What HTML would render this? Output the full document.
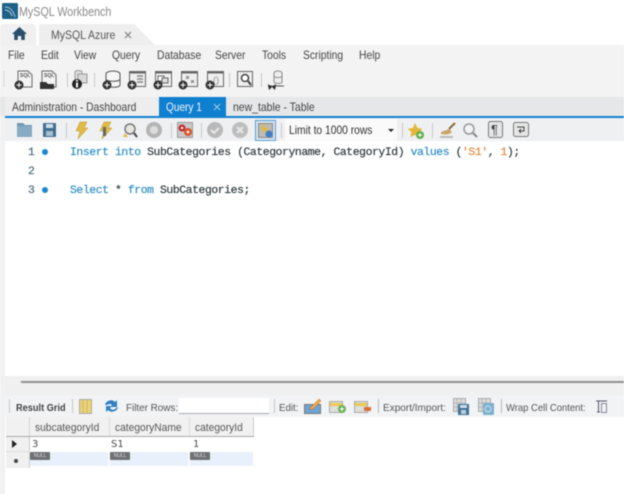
<!DOCTYPE html>
<html><head><meta charset="utf-8">
<style>
html,body{margin:0;padding:0;background:#fff;}
#p{position:relative;width:624px;height:494px;overflow:hidden;background:#fff;font-family:"Liberation Sans",sans-serif;filter:blur(0.5px);}
.a{position:absolute;}
.t{position:absolute;white-space:nowrap;font-size:12px;color:#333;line-height:14px;transform-origin:0 0;}
.mn{color:#444;top:48px;transform:scaleX(.86);}
.m{position:absolute;white-space:nowrap;font-family:"Liberation Mono","DejaVu Sans Mono",monospace;font-size:11.4px;letter-spacing:-.41px;line-height:14px;color:#2f3a3f;font-weight:500;-webkit-text-stroke:0.2px;}
.k{color:#2e8fc4}.o{color:#e08a3c}
.ln{position:absolute;font-family:"Liberation Mono",monospace;font-size:11.4px;line-height:14px;color:#4a6a80;-webkit-text-stroke:.2px;}
.n{position:absolute;width:20px;height:8px;background:#6d6f70;color:#ddd;font-size:5px;line-height:8px;text-align:center;border-radius:1px;}
svg{position:absolute;overflow:visible;}
.sep{position:absolute;width:1px;background:#c4c6c8;}
.gh{top:421px;font-size:11px;color:#555;transform:scaleX(.93);}
.gd{top:438px;font-family:"DejaVu Sans",sans-serif;font-size:10px;color:#4a4a4a;}
.rb{top:401px;font-size:10.5px;color:#555;}
</style></head><body><div id="p">

<!-- title bar -->
<svg style="left:2px;top:3px" width="16" height="16"><rect width="16" height="16" rx="1.5" fill="#1e6187"/><path d="M3 4c5 0 8 3 10 10M3 7c3 0 6 2 7 6" stroke="#a9cde0" stroke-width="1" fill="none"/></svg>
<div class="t" style="left:19px;top:5px;font-size:13px;color:#8a8a8a;transform:scaleX(.825)">MySQL Workbench</div>

<!-- connection tab strip -->
<div class="a" style="left:0;top:24px;width:36px;height:21px;background:#f0f0f0;border-radius:4px 4px 0 0"></div>
<svg style="left:0;top:24px" width="160" height="21"><path d="M39 21V3q0-3 3-3h92l21 21z" fill="#eeeeee"/></svg>
<svg style="left:11px;top:26px" width="17" height="15"><path d="M8.500 1L1 8h2.200v6h3.600v-4h3.400v4h3.600V8H16z" fill="#284e6c"/></svg>
<div class="t" style="left:51px;top:28px;color:#555;transform:scaleX(.875)">MySQL Azure</div>
<svg style="left:124px;top:31px" width="9" height="9"><path d="M1 1l6 6M7 1l-6 6" stroke="#777" stroke-width="1.100"/></svg>

<!-- menu + main toolbar -->
<div class="a" style="left:0;top:45px;width:624px;height:52px;background:#f3f3f3"></div>
<div class="t mn" style="left:8px">File</div>
<div class="t mn" style="left:41px">Edit</div>
<div class="t mn" style="left:74px">View</div>
<div class="t mn" style="left:112px">Query</div>
<div class="t mn" style="left:157px">Database</div>
<div class="t mn" style="left:215px">Server</div>
<div class="t mn" style="left:262px">Tools</div>
<div class="t mn" style="left:303px">Scripting</div>
<div class="t mn" style="left:359px">Help</div>

<svg style="left:0;top:66px" width="300" height="30">
 <path d="M4 5v16" stroke="#bbb" stroke-dasharray="1 1"/>
 <g stroke="#c4c6c8"><path d="M67.500 7v14M94.500 7v14M229.500 7v14M261.500 7v14"/></g>
 <!-- doc sql -->
 <g fill="#f4f4f4" stroke="#666"><path d="M18 5h10l4 4v12H18z"/><path d="M42 5h10l4 4v12H42z"/></g>
 <text x="20" y="11" font-size="5" font-weight="bold" fill="#555" font-family="Liberation Sans">SQL</text>
 <text x="44" y="11" font-size="5" font-weight="bold" fill="#555" font-family="Liberation Sans">SQL</text>
 <path d="M40 16h6l2 2h6v5H40z" fill="#333"/>
 <circle cx="19" cy="19" r="4.500" fill="#333"/><path d="M16.500 19h5M19 16.500v5" stroke="#fff"/>
 <!-- info -->
 <g fill="#ddd" stroke="#999"><path d="M75 6c0-2 7-2 7 0v9h-7z"/><rect x="78" y="8" width="9" height="9" fill="#d8d8d8"/></g>
 <circle cx="77" cy="18" r="5" fill="#222"/><rect x="76" y="16.500" width="2" height="5" fill="#fff"/><rect x="76" y="14" width="2" height="1.500" fill="#fff"/>
 <!-- db -->
 <g fill="#f6f6f6" stroke="#555"><ellipse cx="113" cy="8" rx="7" ry="3"/><path d="M106 8v11c0 3 14 3 14 0V8"/></g><path d="M106 13c0 3 14 3 14 0" fill="none" stroke="#555"/>
 <circle cx="107" cy="19" r="4.500" fill="#333"/><path d="M104.500 19h5M107 16.500v5" stroke="#fff"/>
 <!-- table boxes -->
 <g fill="#eee" stroke="#666"><rect x="129.500" y="5.500" width="16" height="15"/><rect x="155.500" y="5.500" width="16" height="15"/><rect x="181.500" y="5.500" width="16" height="15"/><rect x="207.500" y="5.500" width="16" height="15"/></g>
 <path d="M129 6.500h16M155 6.500h16M181 6.500h16M207 6.500h16" stroke="#666" stroke-width="2"/>
 <path d="M137 10h6M137 13h6M137 16h6" stroke="#888" stroke-width="1.500"/>
 <rect x="158" y="10" width="6" height="5" fill="#fff" stroke="#666"/><rect x="162" y="12" width="6" height="5" fill="#ddd" stroke="#666"/>
 <rect x="186" y="10" width="3" height="3" fill="#999"/><rect x="191" y="14" width="3" height="3" fill="#999"/>
 <text x="213" y="17" font-size="9" fill="#888" font-family="Liberation Sans">()</text>
 <g fill="#333"><circle cx="132" cy="19" r="4.500"/><circle cx="158" cy="19" r="4.500"/><circle cx="183" cy="19" r="4.500"/><circle cx="210" cy="19" r="4.500"/></g>
 <path d="M129.500 19h5M132 16.500v5M155.500 19h5M158 16.500v5M180.500 19h5M183 16.500v5M207.500 19h5M210 16.500v5" stroke="#fff"/>
 <!-- inspector -->
 <rect x="237.500" y="5.500" width="15" height="15" fill="#eee" stroke="#666"/><circle cx="245" cy="12" r="3.500" fill="#fff" stroke="#444" stroke-width="1.500"/><path d="M248 15l3 4" stroke="#444" stroke-width="2"/>
 <!-- reconnect -->
 <g fill="#eee" stroke="#888"><ellipse cx="278" cy="7" rx="4" ry="2"/><path d="M274 7v9c0 2 8 2 8 0V7"/><path d="M274 10c0 2 8 2 8 0" fill="none"/></g>
 <path d="M268 20h16" stroke="#555"/><path d="M268 18l4 3-3 3zM276 18l-4 3 3 3z" fill="#222"/>
</svg>

<!-- editor tab strip -->
<div class="a" style="left:0;top:97px;width:624px;height:19px;background:#e6e7e8"></div>
<div class="a" style="left:5px;top:97px;width:154px;height:19px;background:#ededee"></div>
<div class="t" style="left:12px;top:100px;color:#444;transform:scaleX(.855)">Administration - Dashboard</div>
<div class="a" style="left:159px;top:97px;width:67px;height:21px;background:#0f7fcf"></div>
<div class="t" style="left:166px;top:100px;color:#eef6fc;transform:scaleX(.84)">Query 1</div>
<svg style="left:213px;top:103px" width="9" height="9"><path d="M1 1l6 6M7 1l-6 6" stroke="#9cc9ea" stroke-width="1.100"/></svg>
<div class="t" style="left:233px;top:100px;color:#444;transform:scaleX(.87)">new_table - Table</div>
<div class="a" style="left:5px;top:116px;width:619px;height:2px;background:#1180d0"></div>

<!-- left gutter -->
<div class="a" style="left:0;top:116px;width:5px;height:378px;background:#f1f1f1"></div>

<!-- query toolbar -->
<div class="a" style="left:5px;top:118px;width:619px;height:23px;background:#eff0f1"></div>
<svg style="left:0;top:118px" width="624" height="23">
 <path d="M17 5h6l2 2h7v12H17z" fill="#6f98b3"/><rect x="17" y="8" width="15" height="11" fill="#86abc3"/>
 <rect x="43" y="5" width="13" height="14" rx="1" fill="#3f6f92"/><rect x="46" y="6" width="7" height="4" fill="#cfdde6"/><rect x="46" y="13" width="7" height="5" fill="#a9bfce"/>
 <g stroke="#c6c8ca"><path d="M66.500 5v15M171.500 5v15M201.500 5v15M281.500 5v15M402.500 5v15M432.500 5v15"/></g>
 <path d="M80 4l7 0-3 6h4l-10 11 2-8h-4z" fill="#e0bb45" stroke="#b99532" stroke-width=".5"/>
 <path d="M104 4l7 0-3 6h4l-10 11 2-8h-4z" fill="#e0bb45" stroke="#b99532" stroke-width=".5"/><rect x="103" y="9" width="3" height="9" fill="#666"/>
 <circle cx="130" cy="11" r="5" fill="#e6e6e0" stroke="#777" stroke-width="1.500"/><path d="M134 15l3 4" stroke="#444" stroke-width="2"/><path d="M125 15l-2 4h5z" fill="#e0bb45"/>
 <circle cx="154" cy="12" r="8" fill="#b4b4b4"/><circle cx="154" cy="12" r="4" fill="#dcdcdc"/>
 <rect x="177.500" y="4.500" width="15" height="15" fill="#c9c9c9" stroke="#999"/><circle cx="182" cy="10" r="3.500" fill="#c6262e"/><circle cx="188" cy="14" r="4" fill="#d9552b"/><circle cx="182" cy="10" r="1.200" fill="#fff"/><circle cx="188" cy="14" r="1.300" fill="#fff"/>
 <circle cx="215" cy="12" r="8" fill="#b9b9b9"/><path d="M211 12l3 3 5-5" stroke="#e8e8e8" stroke-width="2" fill="none"/>
 <circle cx="240" cy="12" r="8" fill="#bdbdbd"/><path d="M237 9l6 6M243 9l-6 6" stroke="#e8e8e8" stroke-width="2"/>
 <rect x="255.500" y="2.500" width="20" height="20" fill="#d8e6f2" stroke="#5c9bd0"/><rect x="258.500" y="5.500" width="14" height="14" fill="#bbb" stroke="#888"/><path d="M265 6l-3 5h5l-3 4" stroke="#e2b93b" stroke-width="2" fill="none"/><circle cx="269" cy="16" r="3.500" fill="#3d7fc9"/>
</svg>
<div class="a" style="left:285px;top:119px;width:112px;height:22px;background:#fafafa"></div>
<div class="t" style="left:289px;top:123px;color:#333;transform:scaleX(.857)">Limit to 1000 rows</div>
<svg style="left:0;top:118px" width="624" height="23">
 <path d="M388 11h6l-3 3z" fill="#222"/>
 <path d="M415 5l2.500 5 5 .7-3.600 3.600 1 5-4.900-2.500-4.500 2.500.9-5-3.600-3.600 5-.7z" fill="#e3b63a"/><circle cx="420" cy="17" r="4" fill="#5fae4b"/><path d="M418 17h4M420 15v4" stroke="#fff"/>
 <path d="M441 14l8-3 3 3c-3 3-8 3-11 2z" fill="#c9a66b"/><path d="M449 11l6-6" stroke="#8a6b3c" stroke-width="2"/><path d="M440 19h13" stroke="#bbb" stroke-width="2"/>
 <circle cx="469" cy="11" r="5" fill="#f4f4f4" stroke="#999" stroke-width="1.500"/><path d="M473 15l4 4" stroke="#888" stroke-width="2"/>
 <rect x="488.500" y="3.500" width="14" height="16" rx="2" fill="#e6e6e6" stroke="#777"/><text x="491" y="16" font-size="13" fill="#444" font-family="Liberation Sans">¶</text>
 <rect x="513.500" y="4.500" width="15" height="14" rx="2" fill="#e6e6e6" stroke="#777"/><path d="M517 9h7v4h-5M521 11l-2 2 2 2" stroke="#444" fill="none"/>
</svg>

<!-- editor -->
<div class="ln" style="left:28px;top:146px">1</div>
<div class="ln" style="left:28px;top:165px">2</div>
<div class="ln" style="left:28px;top:184px">3</div>
<div class="a" style="left:42px;top:149px;width:6px;height:6px;border-radius:50%;background:#1b86d0"></div>
<div class="a" style="left:42px;top:187px;width:6px;height:6px;border-radius:50%;background:#1b86d0"></div>
<div class="m" style="left:70px;top:146px"><span class="k">Insert into</span> SubCategories (Categoryname, CategoryId) <span class="k">values</span> (<span class="o">'S1'</span>, <span class="o">1</span>);</div>
<div class="m" style="left:70px;top:184px"><span class="k">Select</span> * <span class="k">from</span> SubCategories;</div>

<!-- splitter -->
<div class="a" style="left:5px;top:376px;width:619px;height:19px;background:#f0f0f0"></div>
<div class="a" style="left:21px;top:381px;width:603px;height:2px;background:#8f9192"></div>

<!-- result toolbar -->
<div class="a" style="left:5px;top:395px;width:619px;height:22px;background:#f2f3f5"></div>
<div class="sep" style="left:9px;top:399px;height:14px"></div>
<div class="t" style="left:16px;top:401px;font-size:10.5px;font-weight:bold;color:#444;transform:scaleX(.877)">Result Grid</div>
<div class="sep" style="left:72px;top:399px;height:14px"></div>
<svg style="left:0;top:395px" width="624" height="22">
 <rect x="79.500" y="4.500" width="12" height="14" fill="#f0d26a" stroke="#aaa"/><path d="M83 4v14M87 4v14" stroke="#aaa" stroke-width=".7"/>
 <path d="M105 10a6 6 0 0 1 10-3l2-2v7h-7l2-2a3.500 3.500 0 0 0-5 0z" fill="#2f7fc1"/><path d="M118 12a6 6 0 0 1-10 3l-2 2v-6h6l-2 2a3.500 3.500 0 0 0 6 0z" fill="#2f7fc1"/>
 <rect x="304.500" y="9.500" width="16" height="9" fill="#6ea5d8" stroke="#777"/><path d="M309 15l2-3 8-8 2 2-8 8z" fill="#e8b23a" stroke="#c33" stroke-width=".4"/>
 <rect x="329.500" y="6.500" width="13" height="11" fill="#ddd" stroke="#aaa"/><rect x="330" y="8" width="12" height="3" fill="#eec94d"/><circle cx="342" cy="14" r="4" fill="#6bb25a"/><path d="M340 14h4M342 12v4" stroke="#fff"/>
 <rect x="354.500" y="6.500" width="13" height="11" fill="#ddd" stroke="#aaa"/><rect x="355" y="8" width="12" height="3" fill="#eec94d"/><rect x="364" y="12" width="7" height="4" fill="#d8703a"/>
 <rect x="453.500" y="3.500" width="12" height="13" fill="#ddd" stroke="#aaa"/><path d="M457 4v12M461 4v12M454 8h11M454 12h11" stroke="#aaa" stroke-width=".7"/><rect x="458" y="9" width="11" height="11" fill="#3f7396"/><rect x="460" y="10" width="7" height="3" fill="#cfdde6"/><rect x="461" y="15" width="5" height="4" fill="#bcd0dc"/>
 <rect x="478.500" y="3.500" width="12" height="13" fill="#ddd" stroke="#aaa"/><path d="M482 4v12M486 4v12M479 8h11M479 12h11" stroke="#aaa" stroke-width=".7"/><rect x="483" y="8" width="11" height="12" rx="1" fill="#7db0cf"/><circle cx="488" cy="14" r="3" fill="none" stroke="#cfe3ef"/>
 <path d="M596 6h11M597 17h3M598.500 6v11" stroke="#556"/><rect x="601.500" y="8.500" width="5" height="9" fill="none" stroke="#889"/>
</svg>
<div class="t rb" style="left:126px;transform:scaleX(.94)">Filter Rows:</div>
<div class="a" style="left:179px;top:398px;width:90px;height:15px;background:#fff;border-bottom:1px solid #aaa"></div>
<div class="sep" style="left:274px;top:399px;height:14px"></div>
<div class="t rb" style="left:279px;transform:scaleX(.92)">Edit:</div>
<div class="sep" style="left:378px;top:399px;height:14px;background:#b4b7ba"></div>
<div class="t rb" style="left:383px;transform:scaleX(.955)">Export/Import:</div>
<div class="sep" style="left:501px;top:399px;height:14px;background:#b4b7ba"></div>
<div class="t rb" style="left:506px;transform:scaleX(.9)">Wrap Cell Content:</div>

<!-- grid -->
<div class="a" style="left:6px;top:417px;width:248px;height:20px;background:#f1f1f1;border-bottom:1px solid #aaa;box-sizing:border-box"></div>
<div class="a" style="left:29px;top:417px;width:1px;height:19px;background:#d4d4d4"></div>
<div class="a" style="left:109px;top:417px;width:1px;height:19px;background:#ddd"></div>
<div class="a" style="left:189px;top:417px;width:1px;height:19px;background:#ddd"></div>
<div class="a" style="left:253px;top:417px;width:1px;height:19px;background:#ccc"></div>
<div class="t gh" style="left:35px">subcategoryId</div>
<div class="t gh" style="left:115px">categoryName</div>
<div class="t gh" style="left:195px">categoryId</div>

<div class="a" style="left:6px;top:437px;width:24px;height:31px;background:#f0f0f0;border-right:1px solid #ccc;box-sizing:border-box"></div>
<div class="a" style="left:6px;top:451px;width:24px;height:1px;background:#ddd"></div>
<svg style="left:12px;top:439px" width="6" height="10"><path d="M0 1l5 4-5 4z" fill="#222"/></svg>
<div class="a" style="left:14px;top:459px;width:4px;height:4px;border-radius:50%;background:#444"></div>
<div class="t gd" style="left:32px">3</div>
<div class="t gd" style="left:111px">S1</div>
<div class="t gd" style="left:193px">1</div>
<div class="a" style="left:30px;top:452px;width:223px;height:14px;background:#e8f1fb"></div>
<div class="a" style="left:108px;top:452px;width:2px;height:14px;background:#f6f9fd"></div>
<div class="a" style="left:188px;top:452px;width:2px;height:14px;background:#f6f9fd"></div>
<div class="n" style="left:30px;top:452px">NULL</div>
<div class="n" style="left:110px;top:452px">NULL</div>
<div class="n" style="left:190px;top:452px">NULL</div>

</div></body></html>
